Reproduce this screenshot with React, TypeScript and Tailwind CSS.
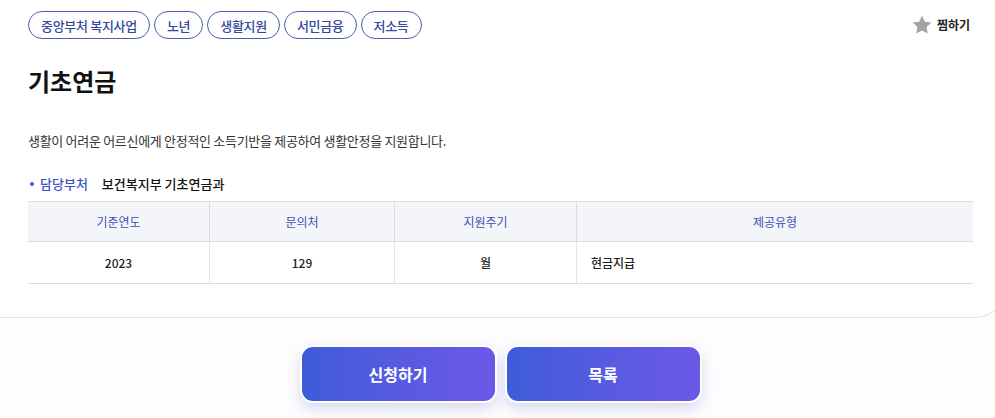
import React from "react";

const tags = ["중앙부처 복지사업", "노년", "생활지원", "서민금융", "저소득"];

export default function App() {
  return (
    <div
      className="relative w-[995px] h-[418px] overflow-hidden bg-[#fdfdfe]"
      style={{ fontFamily: '"Noto Sans CJK KR", "Noto Sans", sans-serif' }}
    >
      <div className="w-[1010px] bg-white border-b border-r border-[#e3e3e6] rounded-br-[36px] pl-[28px] pr-[37px] pt-[11px] pb-[33px]">
        <div className="flex items-start justify-between">
          <div className="flex gap-[4px]">
            {tags.map((t) => (
              <span
                key={t}
                className="h-[28px] px-[12px] flex items-center rounded-full border border-[#4a5cb4] text-[13px] leading-none text-[#33489e] font-medium tracking-[-0.3px]"
              >
                {t}
              </span>
            ))}
          </div>
          <div className="flex items-center gap-[4px] mt-[3px] mr-[2px]">
            <svg width="22" height="22" viewBox="0 0 24 24">
              <path
                d="M12 1.8l3.1 6.6 7.1.9-5.2 5 1.3 7.1L12 18l-6.3 3.4 1.3-7.1-5.2-5 7.1-.9z"
                fill="#a3a3a6"
              />
            </svg>
            <span className="text-[12px] font-bold text-[#222]">찜하기</span>
          </div>
        </div>

        <h1 className="mt-[27px] text-[24px] leading-[30px] font-bold text-[#111]">기초연금</h1>

        <p className="mt-[35px] text-[13px] leading-[20px] text-[#333] tracking-[-0.3px]">
          생활이 어려운 어르신에게 안정적인 소득기반을 제공하여 생활안정을 지원합니다.
        </p>

        <div className="mt-[23px] flex items-center text-[13px] leading-[20px]">
          <span className="w-[4px] h-[4px] rounded-full bg-[#4a5cd0] ml-[2px] mr-[6px]" />
          <span className="text-[#3a54c6] font-medium">담당부처</span>
          <span className="ml-[14px] text-[#111] font-medium">보건복지부 기초연금과</span>
        </div>

        <div className="mt-[7px] w-[945px] border-t border-b border-[#dcdde1]">
          <div className="grid grid-cols-[182px_185px_182px_396px] h-[40px] bg-[#f4f5f8] border-b border-[#dcdde1] text-[12px] text-[#3f51b5]">
            <div className="flex items-center justify-center border-r border-[#dcdde1]">기준연도</div>
            <div className="flex items-center justify-center border-r border-[#dcdde1]">문의처</div>
            <div className="flex items-center justify-center border-r border-[#dcdde1]">지원주기</div>
            <div className="flex items-center justify-center">제공유형</div>
          </div>
          <div className="grid grid-cols-[182px_185px_182px_396px] h-[41px] text-[12px] font-medium text-[#222]">
            <div className="flex items-center justify-center border-r border-[#e3e4e8]">2023</div>
            <div className="flex items-center justify-center border-r border-[#e3e4e8]">129</div>
            <div className="flex items-center justify-center border-r border-[#e3e4e8]">월</div>
            <div className="flex items-center pl-[14px]">현금지급</div>
          </div>
        </div>
      </div>

      <div className="flex justify-center gap-[8px] mt-[27px] pl-[6px]">
        <button className="w-[197px] h-[58px] rounded-[13px] border-2 border-white bg-gradient-to-r from-[#3d5cd8] to-[#6c58e8] text-white text-[16px] font-bold shadow-[0_6px_14px_rgba(90,90,200,0.22)]">
          신청하기
        </button>
        <button className="w-[197px] h-[58px] rounded-[13px] border-2 border-white bg-gradient-to-r from-[#3d5cd8] to-[#6c58e8] text-white text-[16px] font-bold shadow-[0_6px_14px_rgba(90,90,200,0.22)]">
          목록
        </button>
      </div>
    </div>
  );
}
